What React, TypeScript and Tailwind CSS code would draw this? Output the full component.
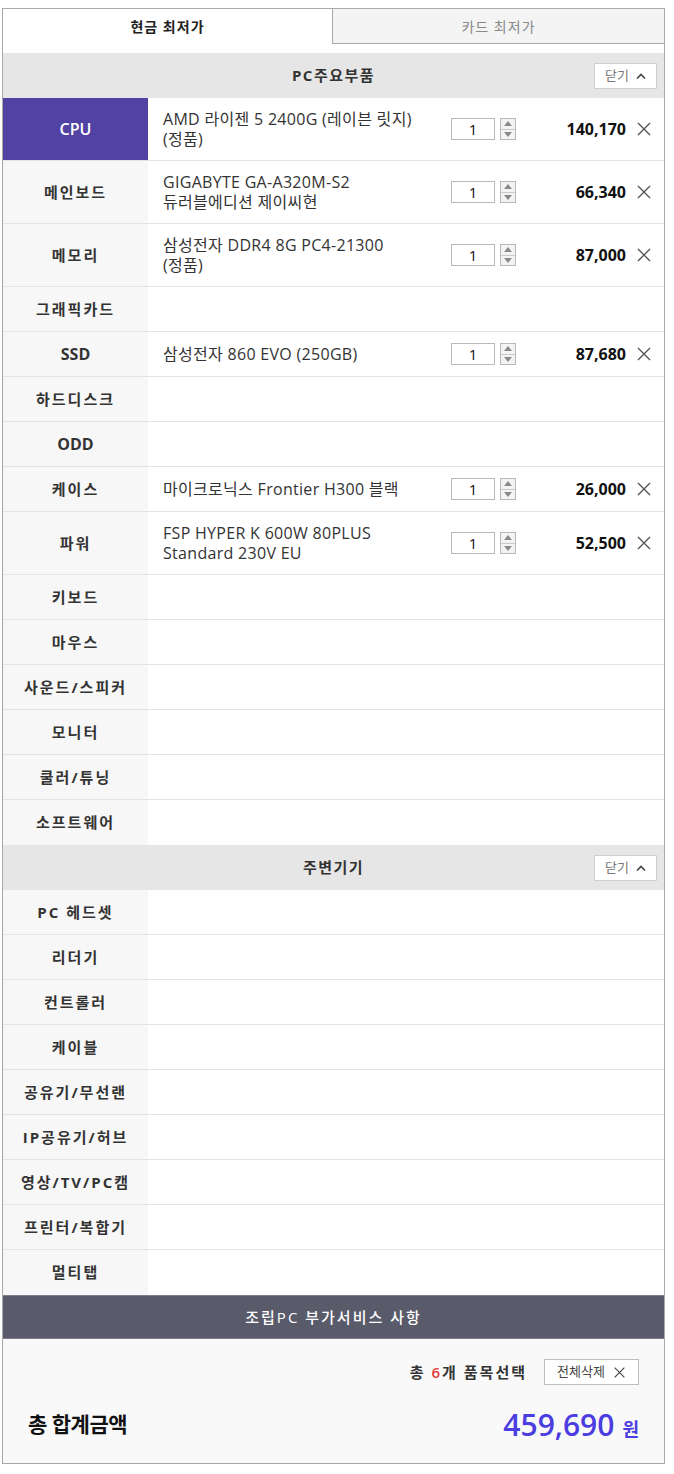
import React from 'react';

type Part = {
  label: string;
  name?: string[];
  price?: string;
  active?: boolean;
};

const mainParts: Part[] = [
  { label: 'CPU', name: ['AMD 라이젠 5 2400G (레이븐 릿지)', '(정품)'], price: '140,170', active: true },
  { label: '메인보드', name: ['GIGABYTE GA-A320M-S2', '듀러블에디션 제이씨현'], price: '66,340' },
  { label: '메모리', name: ['삼성전자 DDR4 8G PC4-21300', '(정품)'], price: '87,000' },
  { label: '그래픽카드' },
  { label: 'SSD', name: ['삼성전자 860 EVO (250GB)'], price: '87,680' },
  { label: '하드디스크' },
  { label: 'ODD' },
  { label: '케이스', name: ['마이크로닉스 Frontier H300 블랙'], price: '26,000' },
  { label: '파워', name: ['FSP HYPER K 600W 80PLUS', 'Standard 230V EU'], price: '52,500' },
  { label: '키보드' },
  { label: '마우스' },
  { label: '사운드/스피커' },
  { label: '모니터' },
  { label: '쿨러/튜닝' },
  { label: '소프트웨어' },
];

const peripherals: Part[] = [
  { label: 'PC 헤드셋' },
  { label: '리더기' },
  { label: '컨트롤러' },
  { label: '케이블' },
  { label: '공유기/무선랜' },
  { label: 'IP공유기/허브' },
  { label: '영상/TV/PC캠' },
  { label: '프린터/복합기' },
  { label: '멀티탭' },
];

const CloseX = ({ className }: { className?: string }) => (
  <svg viewBox="0 0 16 16" className={className} fill="none" stroke="currentColor" strokeWidth="1.4">
    <path d="M2 2 L14 14 M14 2 L2 14" />
  </svg>
);

const Spinner = () => (
  <div className="ml-[5px] flex h-[22px] w-[16px] flex-col border border-[#b9b9b9] bg-[#f3f3f3]">
    <div className="flex flex-1 items-center justify-center border-b border-[#c9c9c9]">
      <svg viewBox="0 0 8 5" className="h-[5px] w-[8px]"><path d="M4 0 L8 5 L0 5 Z" fill="#8a8a8a" /></svg>
    </div>
    <div className="flex flex-1 items-center justify-center">
      <svg viewBox="0 0 8 5" className="h-[5px] w-[8px]"><path d="M0 0 L8 0 L4 5 Z" fill="#8a8a8a" /></svg>
    </div>
  </div>
);

const SectionHeader = ({ title }: { title: string }) => (
  <div className="grid h-[45px] grid-cols-[1fr_auto_1fr] items-center bg-[#e6e6e6]">
    <div />
    <div className="text-[15px] font-bold tracking-[1.5px] text-[#333]">{title}</div>
    <div className="flex justify-end pr-[7px]">
      <button className="flex h-[26px] w-[63px] items-center justify-center gap-[7px] border border-[#cfcfcf] bg-white text-[13px] text-[#777]">
        닫기
        <svg viewBox="0 0 10 6" className="h-[6px] w-[10px]" fill="none" stroke="#444" strokeWidth="1.6">
          <path d="M1 5.5 L5 1.5 L9 5.5" />
        </svg>
      </button>
    </div>
  </div>
);

const PartRow = ({ part, last }: { part: Part; last?: boolean }) => {
  const tall = part.name && part.name.length > 1;
  const latin = /^[A-Z]+$/.test(part.label);
  return (
    <div className={`flex ${tall ? 'h-[63px]' : 'h-[45px]'} ${last ? '' : 'border-b border-[#e3e3e3]'}`}>
      <div
        className={`flex w-[145px] shrink-0 items-center justify-center font-bold ${
          latin ? 'text-[16px] tracking-normal' : 'text-[15px] tracking-[2px]'
        } ${part.active ? 'bg-[#5142a3] text-white font-semibold' : 'bg-[#f7f7f7] text-[#333]'}`}
      >
        {part.label}
      </div>
      {part.name && (
        <div className="flex flex-1 items-center pl-[15px] pr-[12px]">
          <div className="w-[288px] text-[16px] leading-[20px] tracking-[0.3px] text-[#333]">
            {part.name.map(line => (
              <div key={line} className="whitespace-nowrap">{line}</div>
            ))}
          </div>
          <div className="flex h-[22px] w-[44px] items-end justify-center border border-[#b9b9b9] bg-white pb-[1px] text-[15px] leading-[18px] text-[#111]">
            1
          </div>
          <Spinner />
          <div className="flex-1 text-right text-[16px] font-bold text-[#111]">{part.price}</div>
          <CloseX className="ml-[10px] h-[16px] w-[16px] text-[#555]" />
        </div>
      )}
    </div>
  );
};

export default function App() {
  return (
    <div className="w-[674px] bg-white pl-[2px] pt-[8px] font-['Open_Sans','Noto_Sans_CJK_KR',sans-serif]">
      <div className="w-[663px]">
        {/* Tabs */}
        <div className="flex h-[36px]">
          <div className="flex w-[331px] items-center justify-center border-l border-r border-t border-[#a9a9a9] bg-white text-[14px] font-bold tracking-[1px] text-[#222]">
            현금 최저가
          </div>
          <div className="flex flex-1 items-center justify-center border-b border-r border-t border-[#a9a9a9] bg-[#f4f4f4] text-[14px] tracking-[1px] text-[#888]">
            카드 최저가
          </div>
        </div>

        <div className="border-b border-l border-r border-[#a9a9a9]">
          <div className="h-[9px] bg-white" />
          <SectionHeader title="PC주요부품" />
          {mainParts.map((p, i) => (
            <PartRow key={p.label} part={p} last={i === mainParts.length - 1} />
          ))}
          <SectionHeader title="주변기기" />
          {peripherals.map((p, i) => (
            <PartRow key={p.label} part={p} last={i === peripherals.length - 1} />
          ))}

          {/* 부가서비스 */}
          <div className="flex h-[44px] items-center justify-center border-y border-[#7c7e8b] bg-[#595b6b] text-[15px] font-medium tracking-[2px] text-white">
            조립PC 부가서비스 사항
          </div>

          {/* Summary */}
          <div className="flex h-[124px] flex-col bg-[#f9f9f9] px-[25px] pt-[20px]">
            <div className="flex items-center justify-end gap-[17px]">
              <span className="text-[15px] font-semibold tracking-[2px] text-[#333]">
                총 <span className="text-[#e53a3a]">6</span>개 품목선택
              </span>
              <button className="flex h-[26px] w-[95px] items-center justify-center gap-[8px] border border-[#bdbdbd] bg-white text-[13px] text-[#444]">
                전체삭제
                <CloseX className="h-[13px] w-[13px] text-[#444]" />
              </button>
            </div>
            <div className="mt-[17px] flex items-center justify-between">
              <span className="text-[21px] font-bold tracking-[-0.5px] text-[#111]">총 합계금액</span>
              <span className="flex items-baseline gap-[8px] text-[#4b3de0]">
                <span className="text-[30px] font-semibold">459,690</span>
                <span className="text-[18px] font-bold">원</span>
              </span>
            </div>
          </div>
        </div>
      </div>
    </div>
  );
}
